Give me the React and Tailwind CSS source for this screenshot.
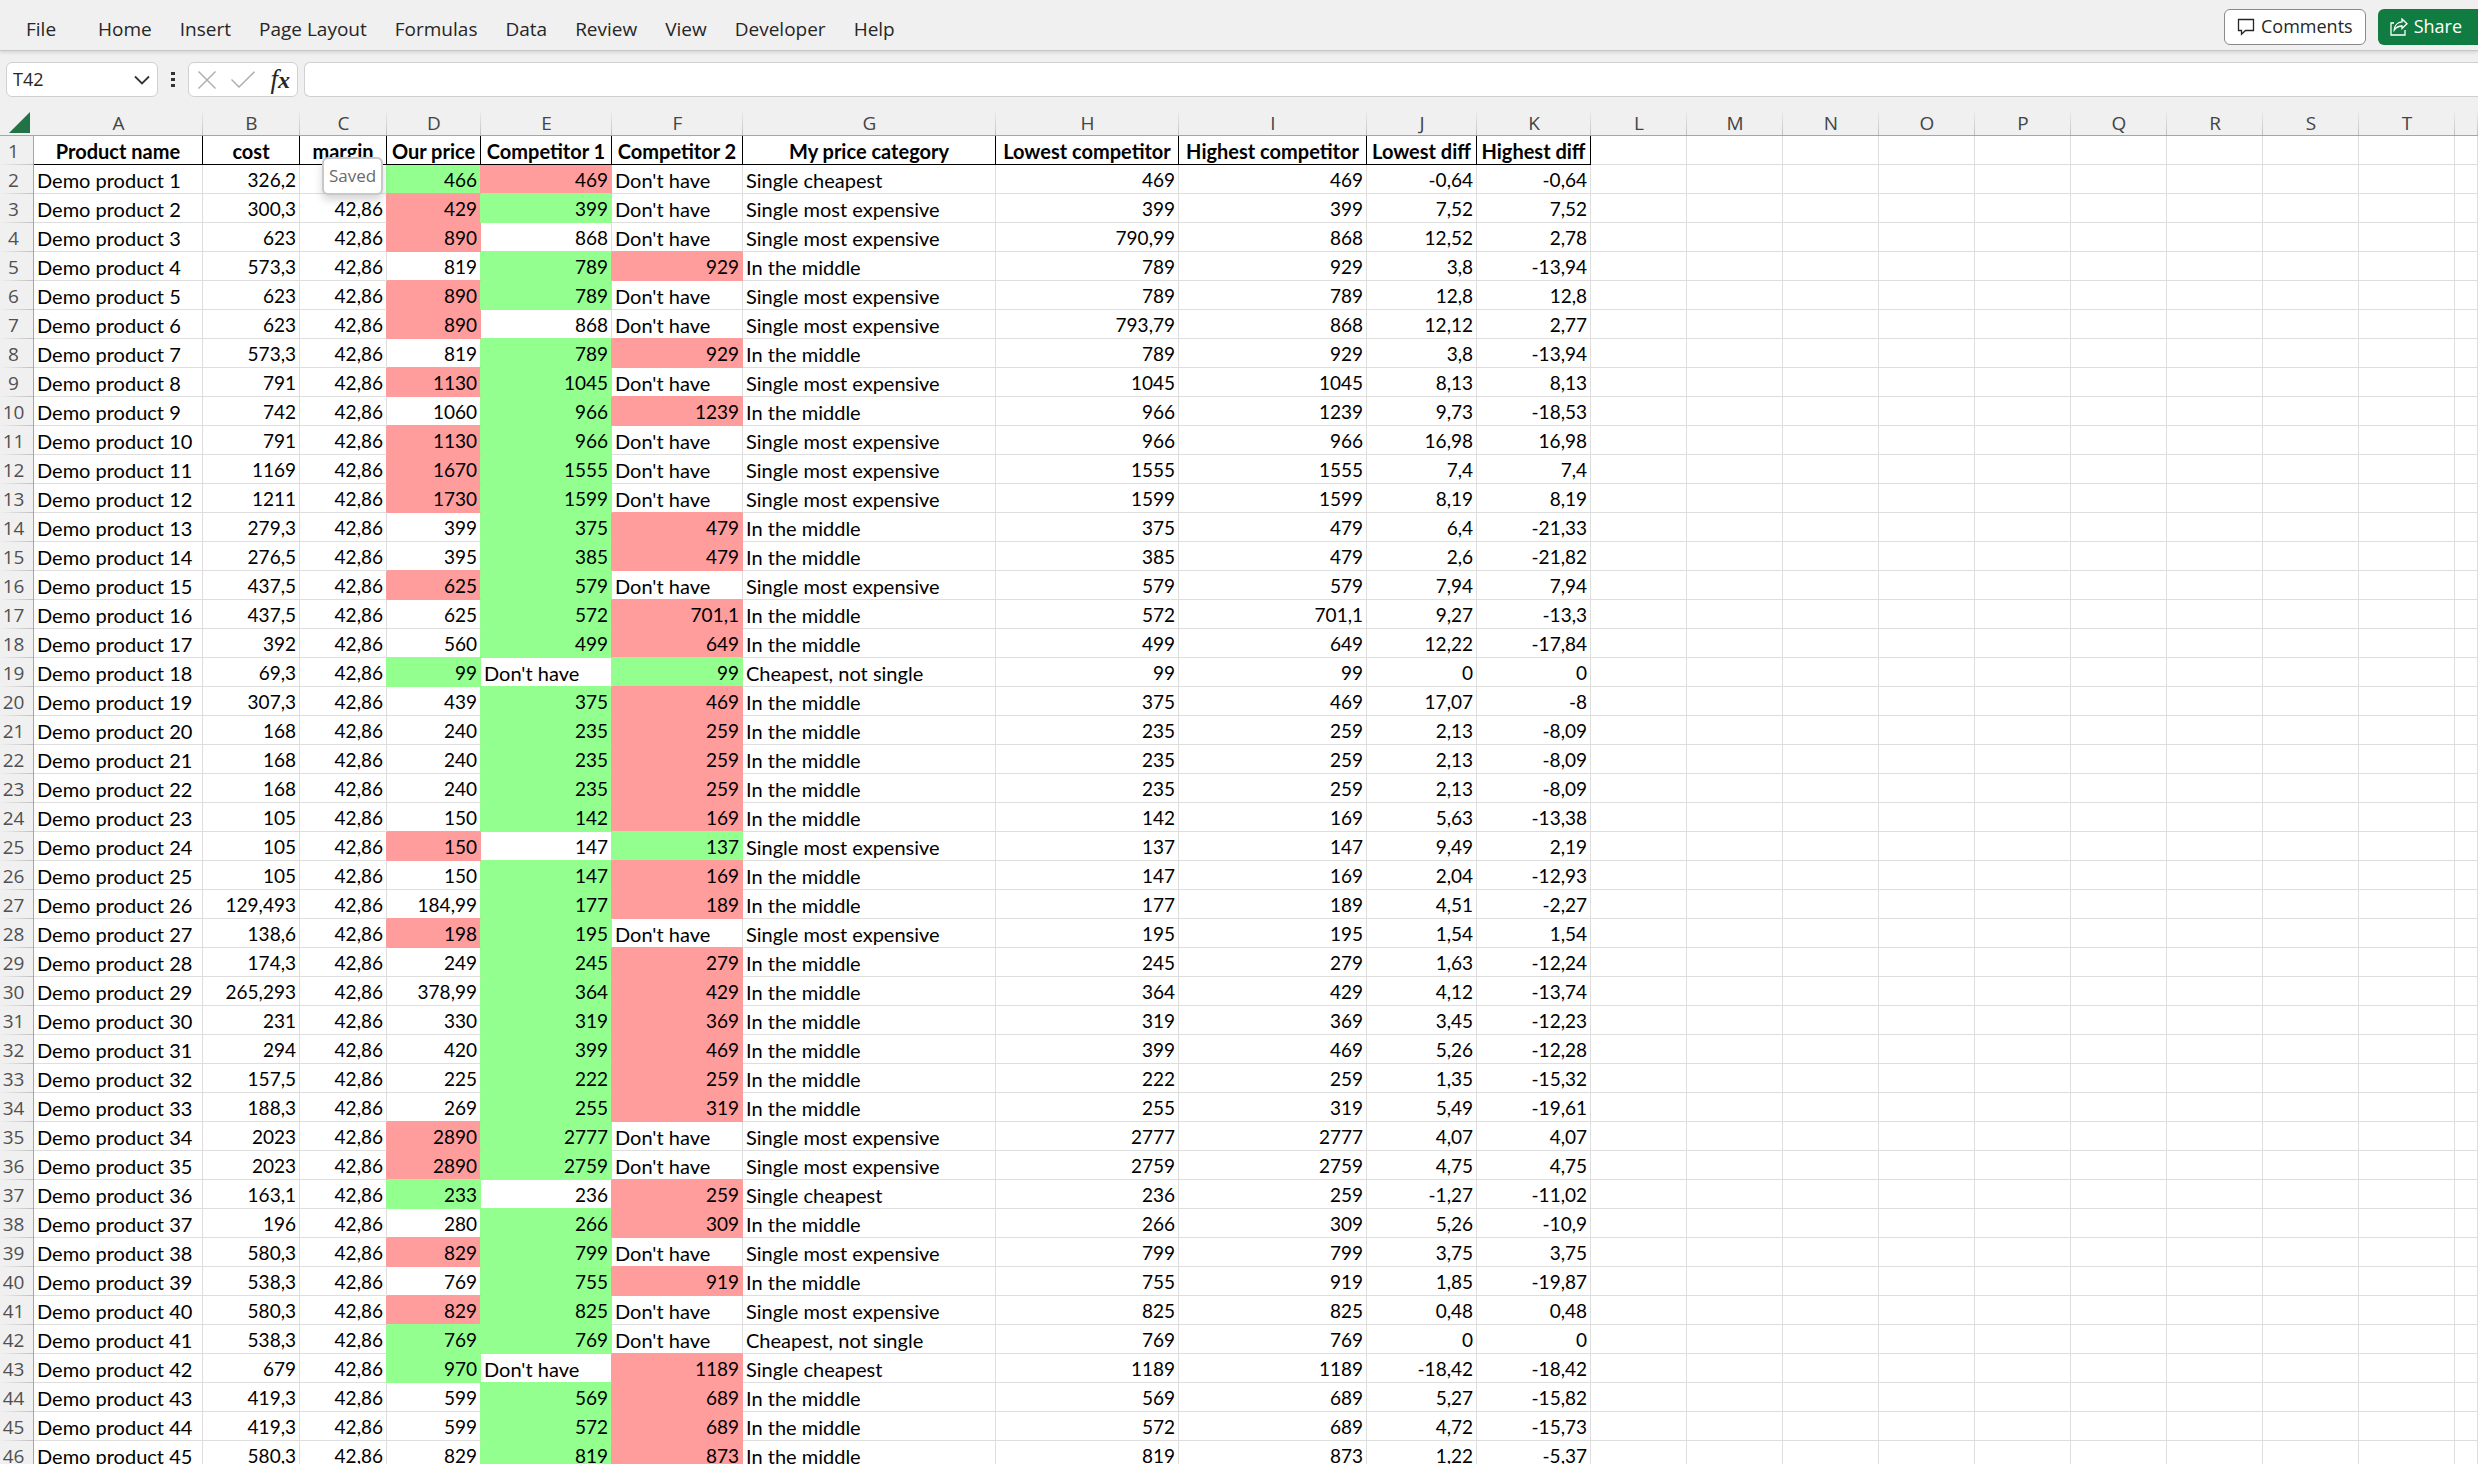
import React from "react";
import clsx from "clsx";

const TABS = ["File", "Home", "Insert", "Page Layout", "Formulas", "Data", "Review", "View", "Developer", "Help"];

const COLUMNS = [
  { letter: "A", width: "w-[169px]", title: "Product name" },
  { letter: "B", width: "w-[97px]", title: "cost" },
  { letter: "C", width: "w-[87px]", title: "margin" },
  { letter: "D", width: "w-[94px]", title: "Our price" },
  { letter: "E", width: "w-[131px]", title: "Competitor 1" },
  { letter: "F", width: "w-[131px]", title: "Competitor 2" },
  { letter: "G", width: "w-[253px]", title: "My price category" },
  { letter: "H", width: "w-[183px]", title: "Lowest competitor" },
  { letter: "I", width: "w-[188px]", title: "Highest competitor" },
  { letter: "J", width: "w-[110px]", title: "Lowest diff" },
  { letter: "K", width: "w-[114px]", title: "Highest diff" },
  { letter: "L", width: "w-[96px]" },
  { letter: "M", width: "w-[96px]" },
  { letter: "N", width: "w-[96px]" },
  { letter: "O", width: "w-[96px]" },
  { letter: "P", width: "w-[96px]" },
  { letter: "Q", width: "w-[96px]" },
  { letter: "R", width: "w-[96px]" },
  { letter: "S", width: "w-[96px]" },
  { letter: "T", width: "w-[96px]" },
  { letter: "", width: "" },
];

const NONE = "Don't have";
const CHEAP = "Single cheapest";
const TIED = "Cheapest, not single";
const MID = "In the middle";
const TOP = "Single most expensive";

// cost, our price, competitor 1, competitor 2, category, lowest, highest, lowest diff, highest diff
const PRODUCTS = [
  ["326,2", "466", "469", NONE, CHEAP, "469", "469", "-0,64", "-0,64"],
  ["300,3", "429", "399", NONE, TOP, "399", "399", "7,52", "7,52"],
  ["623", "890", "868", NONE, TOP, "790,99", "868", "12,52", "2,78"],
  ["573,3", "819", "789", "929", MID, "789", "929", "3,8", "-13,94"],
  ["623", "890", "789", NONE, TOP, "789", "789", "12,8", "12,8"],
  ["623", "890", "868", NONE, TOP, "793,79", "868", "12,12", "2,77"],
  ["573,3", "819", "789", "929", MID, "789", "929", "3,8", "-13,94"],
  ["791", "1130", "1045", NONE, TOP, "1045", "1045", "8,13", "8,13"],
  ["742", "1060", "966", "1239", MID, "966", "1239", "9,73", "-18,53"],
  ["791", "1130", "966", NONE, TOP, "966", "966", "16,98", "16,98"],
  ["1169", "1670", "1555", NONE, TOP, "1555", "1555", "7,4", "7,4"],
  ["1211", "1730", "1599", NONE, TOP, "1599", "1599", "8,19", "8,19"],
  ["279,3", "399", "375", "479", MID, "375", "479", "6,4", "-21,33"],
  ["276,5", "395", "385", "479", MID, "385", "479", "2,6", "-21,82"],
  ["437,5", "625", "579", NONE, TOP, "579", "579", "7,94", "7,94"],
  ["437,5", "625", "572", "701,1", MID, "572", "701,1", "9,27", "-13,3"],
  ["392", "560", "499", "649", MID, "499", "649", "12,22", "-17,84"],
  ["69,3", "99", NONE, "99", TIED, "99", "99", "0", "0"],
  ["307,3", "439", "375", "469", MID, "375", "469", "17,07", "-8"],
  ["168", "240", "235", "259", MID, "235", "259", "2,13", "-8,09"],
  ["168", "240", "235", "259", MID, "235", "259", "2,13", "-8,09"],
  ["168", "240", "235", "259", MID, "235", "259", "2,13", "-8,09"],
  ["105", "150", "142", "169", MID, "142", "169", "5,63", "-13,38"],
  ["105", "150", "147", "137", TOP, "137", "147", "9,49", "2,19"],
  ["105", "150", "147", "169", MID, "147", "169", "2,04", "-12,93"],
  ["129,493", "184,99", "177", "189", MID, "177", "189", "4,51", "-2,27"],
  ["138,6", "198", "195", NONE, TOP, "195", "195", "1,54", "1,54"],
  ["174,3", "249", "245", "279", MID, "245", "279", "1,63", "-12,24"],
  ["265,293", "378,99", "364", "429", MID, "364", "429", "4,12", "-13,74"],
  ["231", "330", "319", "369", MID, "319", "369", "3,45", "-12,23"],
  ["294", "420", "399", "469", MID, "399", "469", "5,26", "-12,28"],
  ["157,5", "225", "222", "259", MID, "222", "259", "1,35", "-15,32"],
  ["188,3", "269", "255", "319", MID, "255", "319", "5,49", "-19,61"],
  ["2023", "2890", "2777", NONE, TOP, "2777", "2777", "4,07", "4,07"],
  ["2023", "2890", "2759", NONE, TOP, "2759", "2759", "4,75", "4,75"],
  ["163,1", "233", "236", "259", CHEAP, "236", "259", "-1,27", "-11,02"],
  ["196", "280", "266", "309", MID, "266", "309", "5,26", "-10,9"],
  ["580,3", "829", "799", NONE, TOP, "799", "799", "3,75", "3,75"],
  ["538,3", "769", "755", "919", MID, "755", "919", "1,85", "-19,87"],
  ["580,3", "829", "825", NONE, TOP, "825", "825", "0,48", "0,48"],
  ["538,3", "769", "769", NONE, TIED, "769", "769", "0", "0"],
  ["679", "970", NONE, "1189", CHEAP, "1189", "1189", "-18,42", "-18,42"],
  ["419,3", "599", "569", "689", MID, "569", "689", "5,27", "-15,82"],
  ["419,3", "599", "572", "689", MID, "572", "689", "4,72", "-15,73"],
  ["580,3", "829", "819", "873", MID, "819", "873", "1,22", "-5,37"],
];

const ROWS = PRODUCTS.map((p, i) => [`Demo product ${i + 1}`, p[0], "42,86", ...p.slice(1)]);

const num = (v) => parseFloat(v.replace(",", "."));

// Conditional formatting of D:F, green for the lowest price in the row, red for the highest
function fillOf(r, c) {
  const row = ROWS[r];
  if (!row || c < 3 || c > 5) return null;
  const value = num(row[c]);
  if (value === Math.min(num(row[3]), num(row[7]))) return "green";
  if (value === Math.max(num(row[3]), num(row[8]))) return "red";
  return null;
}

const BG = { green: "bg-[#92ff8f]", red: "bg-[#ff9c9c]" };
const RIGHT = { green: "border-r-[#92ff8f]", red: "border-r-[#ff9c9c]" };
const BOTTOM = { green: "border-b-[#92ff8f]", red: "border-b-[#ff9c9c]" };

function CommentIcon() {
  return (
    <svg width="18" height="18" viewBox="0 0 18 18" fill="none" stroke="currentColor" strokeWidth="1.3" aria-hidden="true">
      <path d="M1.500 1.500h15v11H8.500L4.500 16.300v-3.800h-3z" />
    </svg>
  );
}

function ShareIcon() {
  return (
    <svg width="18" height="18" viewBox="0 0 18 18" fill="none" stroke="currentColor" strokeWidth="1.3" aria-hidden="true">
      <path d="M4 5H1v12h14v-5" />
      <path d="M12 1l5 4.700-5 4.800V8C8.500 8 6 9.500 4.200 12 4.500 7.500 7.500 4.100 12 3.800z" />
    </svg>
  );
}

function Ribbon() {
  return (
    <header className="relative z-10 flex h-[51px] items-center justify-between border-b border-[#c6c6c6] shadow-[0_1px_4px_rgba(0,0,0,0.15)]">
      <nav className="flex pl-3 pt-2" aria-label="Ribbon">
        {TABS.map((t, i) => (
          <a key={t} href="#" className={clsx("px-[14px] text-[19px] leading-7 text-[#262626]", i === 0 && "mr-[14px]")}>
            {t}
          </a>
        ))}
      </nav>
      <div className="flex gap-3 pt-[3px]">
        <button className="flex h-9 items-center gap-[6px] rounded-[6px] border border-[#8a8a8a] bg-white px-3 text-[18px] text-[#262626]">
          <CommentIcon />
          Comments
        </button>
        <button className="flex h-9 items-center gap-[6px] rounded-l-[6px] bg-[#107c41] pl-3 pr-4 text-[18px] text-white">
          <ShareIcon />
          Share
        </button>
      </div>
    </header>
  );
}

function FormulaBar() {
  return (
    <div className="flex pb-3 pl-[6px] pt-[11px]">
      <div className="flex h-[35px] w-[152px] items-center rounded-[6px] border border-[#d0d0d0] bg-white pl-[6px] pr-[7px]">
        <input aria-label="Name box" defaultValue="T42" className="min-w-0 flex-1 bg-transparent text-[18px] text-[#262626] outline-none" />
        <button aria-label="Open name list">
          <svg width="16" height="10" viewBox="0 0 16 10" fill="none" stroke="#333" strokeWidth="1.8">
            <path d="M1 1.500l7 7 7-7" />
          </svg>
        </button>
      </div>
      <svg className="mx-[13px] mt-[9px]" width="4" height="17" viewBox="0 0 4 17" fill="#333" aria-hidden="true">
        <path d="M0 1h4v3H0zM0 7h4v3H0zM0 13h4v3H0z" />
      </svg>
      <div className="flex h-[35px] w-[110px] items-center justify-between rounded-[6px] border border-[#d0d0d0] bg-white pl-[9px] pr-[7px]">
        <button aria-label="Cancel">
          <svg width="18" height="18" viewBox="0 0 18 18" fill="none" stroke="#ababab" strokeWidth="1.4">
            <path d="M0.500 0.500l17 17M17.500 0.500l-17 17" />
          </svg>
        </button>
        <button aria-label="Enter">
          <svg width="24" height="17" viewBox="0 0 24 17" fill="none" stroke="#ababab" strokeWidth="1.4">
            <path d="M0.500 8.500l7.500 7.500L23.500 0.700" />
          </svg>
        </button>
        <button aria-label="Insert function" className="font-['Liberation_Serif',serif] text-[27px] italic leading-7 text-[#262626]">
          f<span className="text-[24px] font-bold">x</span>
        </button>
      </div>
      <input aria-label="Formula bar" className="ml-[6px] h-[35px] min-w-0 flex-1 rounded-l-[6px] border border-r-0 border-[#d0d0d0] bg-white px-2 text-[18px] outline-none" />
    </div>
  );
}

function RowHeader({ n }) {
  return (
    <th
      scope="row"
      className="h-[29px] border-r border-[#a6a6a6] bg-linear-to-r from-transparent to-[#c0c0c0] bg-[length:100%_1px] bg-bottom bg-no-repeat p-0 pr-[6px] text-center font-['Open_Sans',sans-serif] font-normal leading-7 text-[#505050]"
    >
      {n}
    </th>
  );
}

function Cell({ r, c }) {
  const value = ROWS[r][c] ?? "";
  const fill = fillOf(r, c);
  const isText = c === 0 || c === 6 || value === NONE;
  return (
    <td
      className={clsx(
        "relative h-[29px] whitespace-nowrap border-b border-r px-[3px] pb-0 pt-[2px] leading-[26px]",
        isText ? "text-left text-[20px]" : "text-right text-[19px]",
        fill ? BG[fill] : "bg-white",
        RIGHT[fillOf(r, c + 1) || fill] || "border-r-[#dedede]",
        BOTTOM[fillOf(r + 1, c) || fill] || "border-b-[#dedede]"
      )}
    >
      {value}
      {r === 0 && c === 2 && (
        <span
          role="tooltip"
          className="absolute -top-2 left-[22px] z-10 rounded-[6px] border-2 border-[#c8c8c8] bg-white px-[5px] py-[3px] font-['Open_Sans',sans-serif] text-[17px] leading-7 text-[#6a6a6a] shadow-[0_5px_8px_rgba(0,0,0,0.16)]"
        >
          Saved
        </span>
      )}
    </td>
  );
}

function Sheet() {
  return (
    <table className="w-full table-fixed border-separate border-spacing-0 font-[Lato,sans-serif] text-[19px] text-black">
      <colgroup>
        <col className="w-[34px]" />
        {COLUMNS.map((c, i) => (
          <col key={i} className={c.width} />
        ))}
      </colgroup>
      <thead>
        <tr>
          <td className="h-[27px] border-b border-[#a6a6a6] p-0">
            <button aria-label="Select all" className="ml-[9px] block">
              <svg width="21" height="21" viewBox="0 0 21 21" fill="#217346">
                <path d="M0 21L21 0v21z" />
              </svg>
            </button>
          </td>
          {COLUMNS.map((c, i) => (
            <th
              key={i}
              scope="col"
              className="h-[27px] border-b border-[#a6a6a6] bg-linear-to-t from-[#c0c0c0] to-transparent bg-[length:1px_100%] bg-right bg-no-repeat px-0 pb-0 pt-[2px] text-center font-['Open_Sans',sans-serif] font-normal leading-6 text-[#444]"
            >
              {c.letter}
            </th>
          ))}
        </tr>
      </thead>
      <tbody>
        <tr>
          <RowHeader n={1} />
          {COLUMNS.map((c, i) => (
            <td
              key={i}
              className={clsx(
                "h-[29px] whitespace-nowrap border-b border-r bg-white px-0 pb-0 pt-[2px] text-center text-[20px] font-bold leading-[26px]",
                c.title ? "border-black" : "border-[#dedede]"
              )}
            >
              {c.title}
            </td>
          ))}
        </tr>
        {ROWS.map((row, r) => (
          <tr key={r}>
            <RowHeader n={r + 2} />
            {COLUMNS.map((_, c) => (
              <Cell key={c} r={r} c={c} />
            ))}
          </tr>
        ))}
      </tbody>
    </table>
  );
}

export default function App() {
  return (
    <div className="h-screen overflow-hidden bg-[#f0f0f0] font-['Open_Sans',sans-serif]">
      <Ribbon />
      <FormulaBar />
      <Sheet />
    </div>
  );
}
